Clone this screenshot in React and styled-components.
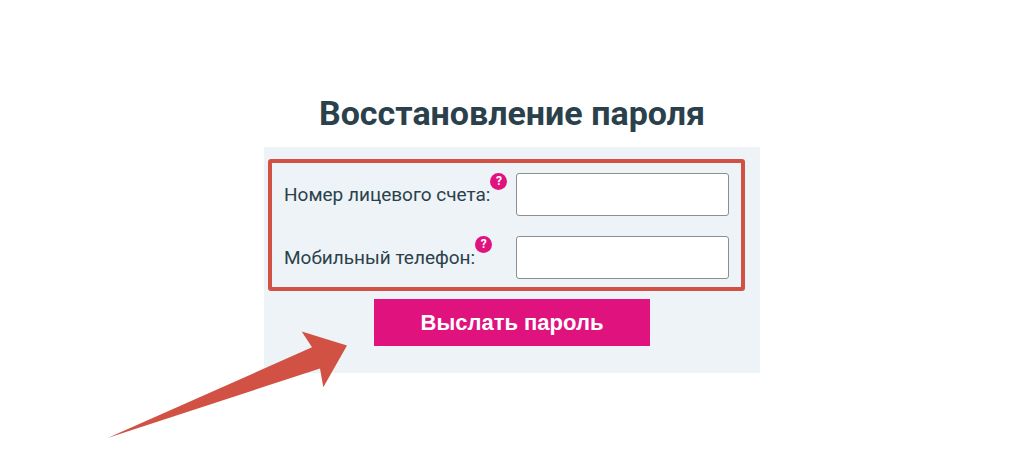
import React from "react";
import styled, { createGlobalStyle } from "styled-components";

const Global = createGlobalStyle`
  * { box-sizing: border-box; }
  body { margin: 0; background: #fff; color: #2a414c; font-family: Roboto, "Liberation Sans", sans-serif; }
`;

const Page = styled.main`
  display: flex;
  flex-direction: column;
  align-items: center;
  padding: 93px 16px;
`;

const Title = styled.h1`
  margin: 0 0 14px;
  font-size: 34px;
  line-height: 40px;
  font-weight: 700;
`;

const Card = styled.form`
  position: relative;
  width: 100%;
  max-width: 496px;
  padding: 12px 15px 27px 4px;
  background: #edf3f6;
`;

const Fields = styled.div`
  display: grid;
  gap: 20px;
  padding: 10px 12px 8px;
  border: 4px solid #d15244;
  border-radius: 3px;
`;

const Row = styled.div`
  display: grid;
  grid-template-columns: 232px 1fr;
  align-items: center;
`;

const LabelCell = styled.div`
  display: flex;
  align-items: flex-start;
`;

const Label = styled.label`
  font-size: 19px;
  line-height: 24px;
  white-space: nowrap;
`;

const Help = styled.button`
  flex: none;
  width: 17px;
  height: 17px;
  margin-top: -10px;
  padding: 0;
  border: 0;
  border-radius: 50%;
  background: #e0127e;
  color: #fff;
  font: 700 12px/17px Roboto, sans-serif;
`;

const Input = styled.input`
  width: 100%;
  height: 43px;
  padding: 0 10px;
  border: 1px solid #8b8f91;
  border-radius: 3px;
  background: #fff;
  font: 19px Roboto, sans-serif;
`;

const Submit = styled.button`
  display: block;
  width: 276px;
  height: 47px;
  margin: 8px auto 0 106px;
  padding: 0;
  border: 0;
  background: #e0127e;
  color: #fff;
  font: 700 22px/46px "Liberation Sans", Arial, sans-serif;
`;

const Arrow = styled.svg`
  position: absolute;
  left: -157px;
  top: 183px;
  width: 242px;
  height: 110px;
  pointer-events: none;
`;

function Field({ id, label, type }) {
  return (
    <Row>
      <LabelCell>
        <Label htmlFor={id}>{label}</Label>
        <Help type="button" aria-label="Подсказка">?</Help>
      </LabelCell>
      <Input id={id} type={type} />
    </Row>
  );
}

export default function App() {
  return (
    <>
      <Global />
      <Page>
        <Title>Восстановление пароля</Title>
        <Card>
          <Fields>
            <Field id="account" label="Номер лицевого счета:" type="text" />
            <Field id="phone" label="Мобильный телефон:" type="tel" />
          </Fields>
          <Submit type="submit">Выслать пароль</Submit>
          <Arrow viewBox="0 0 242 110" aria-hidden="true">
            <path d="M0.5 108L205 17.3L194.7 1.5L240 15.5L216.3 57.3L213 38.5Z" fill="#d15244" />
          </Arrow>
        </Card>
      </Page>
    </>
  );
}
